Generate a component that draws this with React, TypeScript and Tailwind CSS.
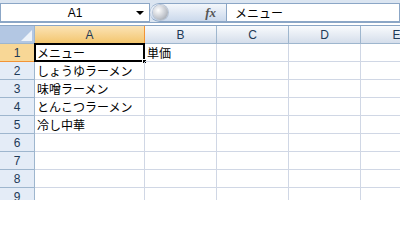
const COLS = [
  { key: 'A', w: 'w-[110px]' },
  { key: 'B', w: 'w-[72px]' },
  { key: 'C', w: 'w-[72px]' },
  { key: 'D', w: 'w-[72px]' },
  { key: 'E', w: 'w-[72px]' },
]

const DATA: Record<number, string[]> = {
  1: ['メニュー', '単価'],
  2: ['しょうゆラーメン'],
  3: ['味噌ラーメン'],
  4: ['とんこつラーメン'],
  5: ['冷し中華'],
}

const ROWS = [1, 2, 3, 4, 5, 6, 7, 8, 9]

const jp = 'font-["MS_PGothic","Noto_Sans_CJK_JP",sans-serif]'

function FormulaBar() {
  return (
    <div className="bg-[#dbe5f1] pt-[3px]">
      <div className="flex h-[19px]">
        <div className="relative flex w-[150px] items-center justify-center border border-[#8ba6c6] bg-white">
          <span className="font-['Liberation_Sans',sans-serif] text-[12px] text-black">A1</span>
          <span className="absolute right-[5px] top-[7px] h-0 w-0 border-x-[4px] border-t-[4px] border-x-transparent border-t-black" />
        </div>
        <div className="flex w-[77px] items-center rounded-l-full border border-l-0 border-[#8ba6c6] bg-gradient-to-b from-[#f4f7fb] to-[#cbd9ec]">
          <span className="ml-[3px] h-[15px] w-[15px] rounded-full bg-[radial-gradient(circle_at_35%_35%,#ffffff,#c4c8cf_55%,#8e949c)] shadow-[0_0_0_1px_#b7c4d6]" />
          <span className="ml-auto mr-[10px] font-['Liberation_Serif',serif] text-[13px] font-bold italic text-[#555]">
            fx
          </span>
        </div>
        <div className="flex flex-1 items-center border border-l-0 border-[#8ba6c6] bg-white pl-[8px]">
          <span className={`${jp} text-[12px] text-black`}>メニュー</span>
        </div>
      </div>
      <div className="h-[4px] border-y border-[#8ba6c6] bg-white" />
    </div>
  )
}

function ColHeader({ label, w, active }: { label: string; w: string; active?: boolean }) {
  return (
    <div
      className={`${w} flex h-[18px] shrink-0 items-center justify-center border-r border-b font-['Liberation_Sans',sans-serif] text-[12px] text-[#1e3a57] ${
        active
          ? 'border-[#f29436] bg-gradient-to-b from-[#fbe3b5] to-[#f3c66d]'
          : 'border-[#9eb6ce] bg-gradient-to-b from-[#f9fbfd] to-[#d5deeb]'
      }`}
    >
      {label}
    </div>
  )
}

export default function App() {
  return (
    <div className="h-[200px] w-[400px] overflow-hidden bg-white">
      <FormulaBar />
      <div className="flex">
        <div className="relative h-[18px] w-[35px] shrink-0 border-r border-b border-[#9eb6ce] bg-[#b3c7e3]">
          <span className="absolute bottom-[2px] right-[2px] h-0 w-0 border-b-[11px] border-l-[11px] border-b-[#eef3fa] border-l-transparent" />
        </div>
        {COLS.map((c) => (
          <ColHeader key={c.key} label={c.key} w={c.w} active={c.key === 'A'} />
        ))}
      </div>
      {ROWS.map((r) => (
        <div key={r} className="flex">
          <div
            className={`flex h-[18px] w-[35px] shrink-0 items-center justify-center border-r border-b font-['Liberation_Sans',sans-serif] text-[12px] text-[#1e3a57] ${
              r === 1 ? 'border-[#f29436] bg-[#f8d796]' : 'border-[#9eb6ce] bg-[#e4ecf7]'
            }`}
          >
            {r}
          </div>
          {COLS.map((c, i) => {
            const text = DATA[r]?.[i]
            return (
              <div
                key={c.key}
                className={`${c.w} relative flex h-[18px] shrink-0 items-center whitespace-nowrap border-r border-b border-[#d0d7e5] pl-[2px] ${jp} text-[12px] text-black`}
              >
                {text}
                {r === 1 && i === 0 && (
                  <>
                    <span className="pointer-events-none absolute -left-px -top-px bottom-[-1px] right-[-1px] border-2 border-black" />
                    <span className="absolute -bottom-[3px] -right-[3px] h-[5px] w-[5px] border border-white bg-black" />
                  </>
                )}
              </div>
            )
          })}
        </div>
      ))}
    </div>
  )
}
